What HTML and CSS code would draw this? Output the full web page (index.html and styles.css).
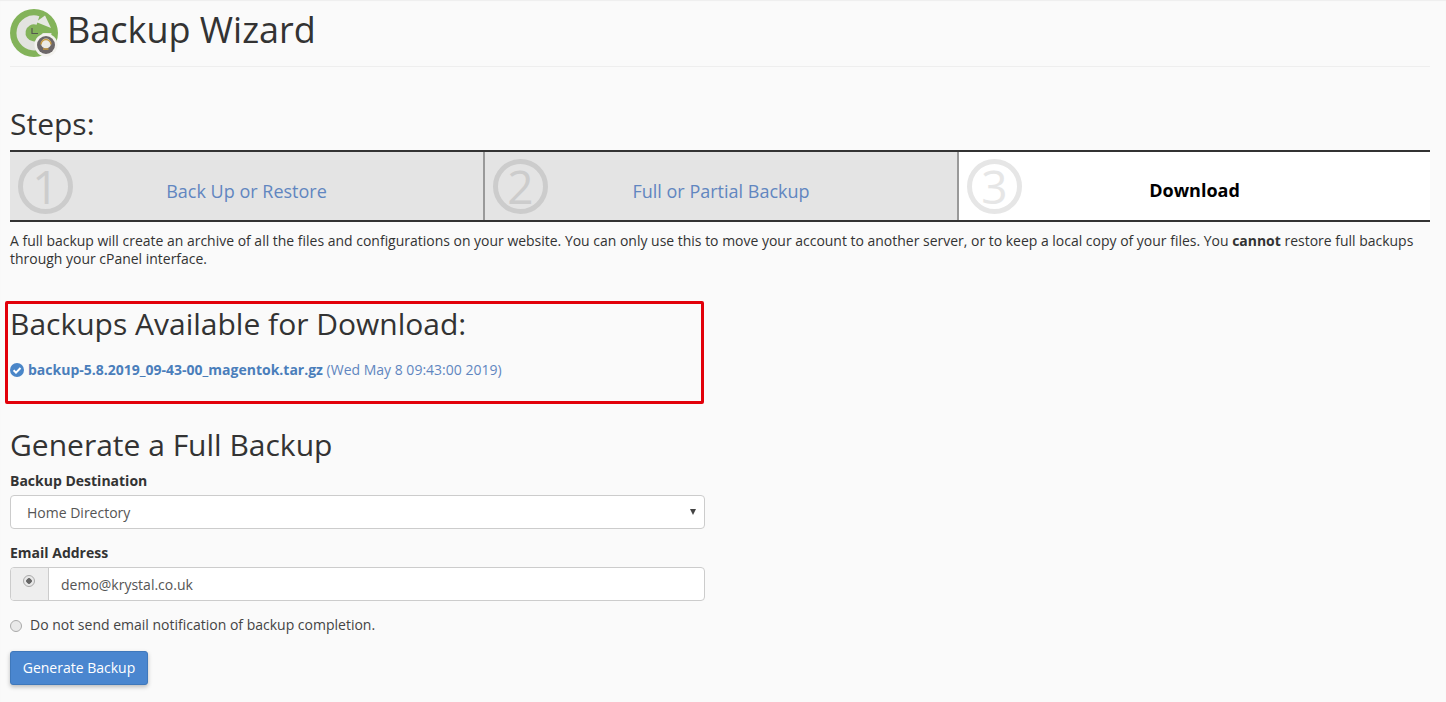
FILE: index.html
```html
<!DOCTYPE html>
<html lang="en">
<head>
<meta charset="utf-8">
<title>Backup Wizard</title>
<link rel="stylesheet" href="styles.css">
</head>
<body>
<header class="page-head">
  <svg class="logo" width="48" height="48" viewBox="0 0 48 48" aria-hidden="true">
    <circle cx="24" cy="24" r="24" fill="#83b35a"/>
    <path d="M28 11.500A13 13 0 1 0 37 24" fill="none" stroke="#e2e3df" stroke-width="9"/>
    <path d="M26 13 35 6.500 41 19Z" fill="#e6e8e3"/>
    <path d="M22 19v5.500h6" fill="none" stroke="#55584f" stroke-width="1.200"/>
    <circle cx="36" cy="36" r="11.500" fill="#f3f2ee"/>
    <circle cx="36" cy="36" r="9" fill="#6c6768"/>
    <circle cx="36" cy="34.500" r="5" fill="#ecebe6"/>
    <path d="M31 35.500a5 5 0 0 1 10 0M33 40h5.500" fill="none" stroke="#c79b44" stroke-width="1.500"/>
  </svg>
  <h1 class="page-title">Backup Wizard</h1>
</header>

<main>
  <h2 class="steps-title">Steps:</h2>
  <ol class="steps">
    <li class="step">
      <span class="step-num">1</span>
      <a class="step-link" href="#">Back Up or Restore</a>
    </li>
    <li class="step">
      <span class="step-num">2</span>
      <a class="step-link" href="#">Full or Partial Backup</a>
    </li>
    <li class="step step-current">
      <span class="step-num">3</span>
      <span class="step-label">Download</span>
    </li>
  </ol>
  <p class="intro">A full backup will create an archive of all the files and configurations on your website. You can only use this to move your account to another server, or to keep a local copy of your files. You <strong>cannot</strong> restore full backups through your cPanel interface.</p>

  <section class="available">
    <h2 class="available-title">Backups Available for Download:</h2>
    <p class="backup-row">
      <svg class="check" width="14" height="14" viewBox="0 0 14 14" aria-hidden="true">
        <circle cx="7" cy="7" r="7" fill="#4a86c8"/>
        <path d="M3.600 7.200 6 9.600 10.500 5" fill="none" stroke="#fff" stroke-width="2"/>
      </svg>
      <a class="backup-link" href="#"><strong>backup-5.8.2019_09-43-00_magentok.tar.gz</strong> (Wed May 8 09:43:00 2019)</a>
    </p>
  </section>

  <h2 class="generate-title">Generate a Full Backup</h2>
  <form class="form">
    <label class="field-label">Backup Destination</label>
    <div class="select">
      <span>Home Directory</span>
      <span class="caret"></span>
    </div>
    <label class="field-label field-label-email">Email Address</label>
    <div class="input-group">
      <span class="addon"><span class="radio radio-on"></span></span>
      <span class="input">demo@krystal.co.uk</span>
    </div>
    <div class="radio-row">
      <span class="radio"></span>
      <span>Do not send email notification of backup completion.</span>
    </div>
    <button class="btn" type="button">Generate Backup</button>
  </form>
</main>
</body>
</html>
```
FILE: styles.css
```css
* { box-sizing: border-box; }
html, body { height: 100%; }
body {
  margin: 0;
  padding: 0 16px 0 10px;
  height: 702px;
  overflow: hidden;
  background: #fafafa;
  color: #333;
  font-family: "Open Sans", sans-serif;
  font-size: 14px;
  line-height: 20px;
  box-shadow: inset 0 1px 1px #eee;
}
.page-head {
  display: flex;
  align-items: center;
  gap: 10px;
  height: 67px;
  padding-bottom: 10px;
  padding-top: 4px;
  border-bottom: 1px solid #eee;
}
.logo { display: block; flex: none; margin-top: 6px; }
.page-title {
  margin: 0 0 0 -1px;
  font-size: 36px;
  font-weight: 400;
  line-height: 40px;
  color: #333;
}
.steps-title {
  margin: 40px 0 9px;
  font-size: 30px;
  font-weight: 400;
  line-height: 34px;
}
.steps {
  display: grid;
  grid-template-columns: 475px 474px 471px;
  height: 72px;
  margin: 0;
  padding: 0;
  list-style: none;
  border-top: 2px solid #333;
  border-bottom: 2px solid #333;
}
.step {
  display: flex;
  position: relative;
  align-items: center;
  justify-content: center;
  padding-top: 10px;
  background: #e4e4e4;
  font-size: 18px;
  border-right: 2px solid #999;
}
.step-current {
  background: #fff;
  border-right: 0;
  padding-top: 8px;
  font-weight: 700;
  color: #000;
}
.step-num {
  position: absolute;
  left: 8px;
  top: 7px;
  width: 55px;
  height: 55px;
  border: 5px solid #ccc;
  border-radius: 50%;
  color: #ccc;
  font-size: 46px;
  font-weight: 400;
  line-height: 44px;
  text-align: center;
}
.step-current .step-num {
  border-color: #e6e6e6;
  color: #e6e6e6;
  font-weight: 400;
}
.step-link { color: #6186c0; text-decoration: none; }
.intro {
  margin: 0;
  padding-top: 10px;
  font-size: 13.970px;
  line-height: 18px;
  width: 1420px;
}
.available {
  width: 699px;
  height: 103px;
  margin: 33px 0 0 -5px;
  padding: 0 0 0 2px;
  border: 3px solid #e2000a;
  border-radius: 2px;
}
.available-title {
  margin: 1px 0 0;
  font-size: 30px;
  font-weight: 400;
  line-height: 38px;
}
.backup-row {
  display: flex;
  align-items: center;
  gap: 4px;
  margin: 17px 0 0;
  line-height: 20px;
}
.check { flex: none; }
.backup-link { color: #6186c0; text-decoration: none; }
.backup-link strong { color: #4a7ebb; }
.generate-title {
  margin: 23px 0 8px;
  font-size: 30px;
  font-weight: 400;
  line-height: 36px;
}
.form { width: 695px; }
.field-label {
  display: block;
  font-weight: 700;
  line-height: 20px;
  margin-bottom: 4px;
}
.field-label-email { margin-top: 14px; }
.select {
  display: flex;
  align-items: center;
  justify-content: space-between;
  height: 34px;
  padding: 2px 8px 0 16px;
  background: #fff;
  border: 1px solid #ccc;
  border-radius: 4px;
  color: #555;
}
.caret {
  width: 0;
  height: 0;
  margin-bottom: 2px;
  border-left: 3px solid transparent;
  border-right: 3px solid transparent;
  border-top: 6px solid #444;
}
.input-group {
  display: flex;
  height: 34px;
  border: 1px solid #ccc;
  border-radius: 4px;
  background: #fff;
  color: #555;
  overflow: hidden;
}
.addon {
  display: flex;
  justify-content: center;
  padding: 7px 1px 0 0;
  width: 38px;
  flex: none;
  background: #eee;
  border-right: 1px solid #ccc;
}
.input {
  padding-left: 12px;
  line-height: 34px;
}
.radio {
  display: block;
  flex: none;
  width: 12px;
  height: 12px;
  border: 1px solid #aaa;
  border-radius: 50%;
  background: #e9e9e9;
}
.radio-on {
  background: radial-gradient(circle, #666 0 2.500px, #e8e8e8 3px);
}
.radio-row {
  display: flex;
  align-items: center;
  gap: 8px;
  margin-top: 14px;
  color: #444;
}
.radio-row .radio { margin-top: 2px; }
.btn {
  display: block;
  width: 138px;
  height: 34px;
  margin-top: 16px;
  padding: 0 0 2px;
  background: #4a86cf;
  border: 1px solid #3f78bb;
  border-radius: 3px;
  box-shadow: 0 2px 4px rgba(0,0,0,.25);
  color: #fff;
  font-family: inherit;
  font-size: 14px;
}
```
